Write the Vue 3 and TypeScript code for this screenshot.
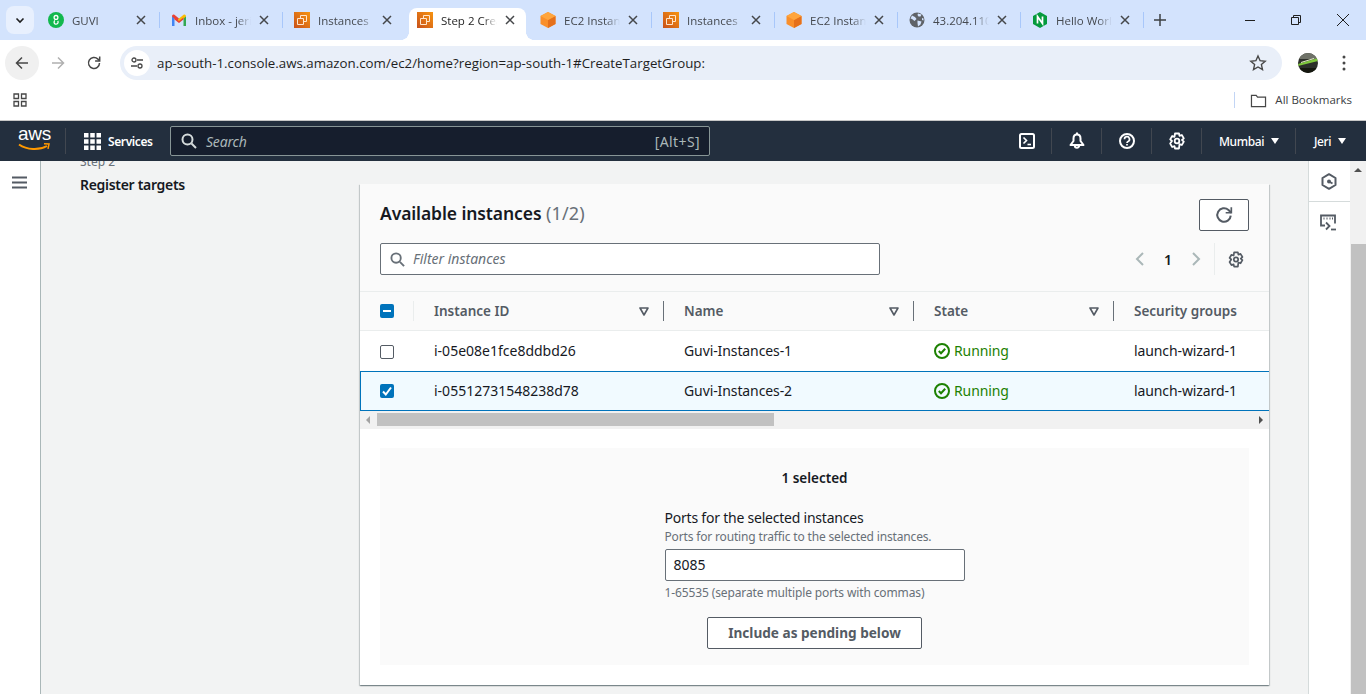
<script setup lang="ts">
interface Tab {
  title: string
  icon: 'guvi' | 'gmail' | 'instances' | 'cube' | 'globe' | 'nginx'
  active?: boolean
}

const tabs: Tab[] = [
  { title: 'GUVI', icon: 'guvi' },
  { title: 'Inbox - jeri', icon: 'gmail' },
  { title: 'Instances | EC2', icon: 'instances' },
  { title: 'Step 2 Create', icon: 'instances', active: true },
  { title: 'EC2 Instance', icon: 'cube' },
  { title: 'Instances | EC2', icon: 'instances' },
  { title: 'EC2 Instance', icon: 'cube' },
  { title: '43.204.110.12', icon: 'globe' },
  { title: 'Hello World', icon: 'nginx' },
]

const columns = ['Instance ID', 'Name', 'State', 'Security groups']

const rows = [
  { id: 'i-05e08e1fce8ddbd26', name: 'Guvi-Instances-1', state: 'Running', group: 'launch-wizard-1', selected: false },
  { id: 'i-05512731548238d78', name: 'Guvi-Instances-2', state: 'Running', group: 'launch-wizard-1', selected: true },
]
</script>

<template>
  <div class="screen">
    <!-- browser tab strip -->
    <div class="tabstrip">
      <button class="tab-search">
        <svg width="12" height="12" viewBox="0 0 12 12" fill="none" stroke="#1f1f1f" stroke-width="1.6"><path d="M2.5 4.5 6 8l3.5-3.500" /></svg>
      </button>
      <div v-for="t in tabs" :key="t.title + t.icon" class="tab" :class="{ active: t.active }">
        <svg v-if="t.icon === 'guvi'" class="fav" viewBox="0 0 16 16">
          <circle cx="8" cy="8" r="8" fill="#12b84e" />
          <circle cx="8" cy="5.400" r="1.900" fill="none" stroke="#fff" stroke-width="1.300" />
          <path d="M9.700 9a2 2 0 1 1-2.700-.5" fill="none" stroke="#fff" stroke-width="1.300" />
        </svg>
        <svg v-else-if="t.icon === 'gmail'" class="fav" viewBox="0 0 16 16">
          <path d="M1 14V4l2.500 1.500V14Z" fill="#4285f4" />
          <path d="M12.500 14V5.500L15 4v10Z" fill="#34a853" />
          <path d="M1 4.500C1 2.600 2.400 2 3.400 2.800L8 6.400l-1 3L1 4.500Z" fill="#ea4335" />
          <path d="M8 6.400l4.600-3.600c1-.8 2.400-.2 2.400 1.700l-2.500 2L8 10 6.500 8.800Z" fill="#fbbc04" />
          <path d="M3.500 5.500 8 9l4.500-3.500v2L8 11 3.500 7.500Z" fill="#ea4335" />
        </svg>
        <svg v-else-if="t.icon === 'instances'" class="fav" viewBox="0 0 16 16">
          <defs>
            <linearGradient id="ec2grad" x1="0" y1="1" x2="1" y2="0">
              <stop offset="0" stop-color="#c8511b" />
              <stop offset="1" stop-color="#f79410" />
            </linearGradient>
          </defs>
          <rect width="16" height="16" fill="url(#ec2grad)" />
          <path d="M6.500 6V3.500h6v6H10M3.500 6.500h6v6h-6Z" fill="none" stroke="#ffe6cc" stroke-width="1" />
        </svg>
        <svg v-else-if="t.icon === 'cube'" class="fav" viewBox="0 0 16 16">
          <path d="M8 0 15.500 4v8L8 16 .5 12V4Z" fill="#f98f2b" />
          <path d="M8 8v8l7.500-4V4Z" fill="#e5701b" />
          <path d="M8 0 15.500 4 8 8 .5 4Z" fill="#ffa53d" />
        </svg>
        <svg v-else-if="t.icon === 'globe'" class="fav" viewBox="0 0 16 16">
          <circle cx="8" cy="8" r="7.500" fill="#5f6368" />
          <path d="M3 3.500 6 5l1.500 2L5.500 9 3 7 1.500 6.500ZM9 1.500l3.500 1-1 2H9.500L8.500 3ZM8.500 8.500l4 1-1 3L9 14.500l-.5-3.500ZM13 6l1.500.5v2L13 8Z" fill="#d3e3fd" />
        </svg>
        <svg v-else class="fav" viewBox="0 0 16 16">
          <path d="M8 0 15 4v8l-7 4-7-4V4Z" fill="#049a3c" />
          <path d="M5.500 11.500v-7l5 7v-7" fill="none" stroke="#fff" stroke-width="1.700" />
        </svg>
        <span class="tab-title">{{ t.title }}</span>
        <svg class="tab-close" width="10" height="10" viewBox="0 0 10 10" stroke="#45474a" stroke-width="1.500"><path d="M1 1l8 8M9 1 1 9" /></svg>
      </div>
      <svg class="tab-plus" width="14" height="14" viewBox="0 0 14 14" stroke="#3c4043" stroke-width="1.500"><path d="M7 1v12M1 7h12" /></svg>
      <div class="win-btns">
        <svg width="12" height="12" viewBox="0 0 12 12" stroke="#1f1f1f"><path d="M1 6.500h10" /></svg>
        <svg width="12" height="12" viewBox="0 0 12 12" fill="none" stroke="#1f1f1f"><path d="M1.500 3.500h7v7h-7ZM3.500 3.500v-2h7v7h-2" /></svg>
        <svg width="14" height="14" viewBox="0 0 14 14" stroke="#1f1f1f"><path d="M1 1l12 12M13 1 1 13" /></svg>
      </div>
    </div>

    <!-- browser toolbar -->
    <div class="toolbar">
      <div class="back-btn">
        <svg width="16" height="16" viewBox="0 0 16 16" fill="none" stroke="#474747" stroke-width="1.500"><path d="M14 8H2.500M8 2.500 2.500 8 8 13.500" /></svg>
      </div>
      <svg class="fwd" width="16" height="16" viewBox="0 0 16 16" fill="none" stroke="#b0b0b0" stroke-width="1.500"><path d="M2 8h11.500M8 2.500 13.500 8 8 13.500" /></svg>
      <svg class="reload" width="16" height="16" viewBox="0 0 16 16" fill="none" stroke="#474747" stroke-width="1.500"><path d="M13.500 8a5.500 5.500 0 1 1-1.600-3.900L13.500 5.800" /><path d="M13.700 1.500v4.600H9.100" /></svg>
      <div class="omnibox">
        <span class="site-chip">
          <svg width="14" height="14" viewBox="0 0 14 14" fill="none" stroke="#474747" stroke-width="1.300"><path d="M7 4h6M1 10h6" /><circle cx="4" cy="4" r="2" /><circle cx="10" cy="10" r="2" /></svg>
        </span>
        <span class="url">ap-south-1.console.aws.amazon.com/ec2/home?region=ap-south-1#CreateTargetGroup:</span>
        <svg class="star" width="18" height="18" viewBox="0 0 18 18" fill="none" stroke="#474747" stroke-width="1.400"><path d="M9 2l2.100 4.700 5.100.5-3.800 3.400 1.100 5L9 13l-4.500 2.600 1.100-5L1.800 7.200l5.100-.5Z" /></svg>
      </div>
      <svg class="avatar" width="20" height="20" viewBox="0 0 20 20">
        <clipPath id="avatarclip"><circle cx="10" cy="10" r="10" /></clipPath>
        <g clip-path="url(#avatarclip)">
          <rect width="20" height="20" fill="#2c2f2a" />
          <rect y="0" width="20" height="6" fill="#6f7268" />
          <path d="M0 11 20 5v3L0 13Z" fill="#7ec63b" />
          <path d="M3 9l13-4v1L3 10Z" fill="#e8f1c8" />
          <rect y="15" width="20" height="5" fill="#15170f" />
        </g>
      </svg>
      <svg class="kebab" width="4" height="16" viewBox="0 0 4 16" fill="#474747"><circle cx="2" cy="2" r="1.500" /><circle cx="2" cy="8" r="1.500" /><circle cx="2" cy="14" r="1.500" /></svg>
    </div>

    <!-- bookmarks bar -->
    <div class="bookmarks">
      <svg width="16" height="16" viewBox="0 0 16 16" fill="none" stroke="#474747" stroke-width="1.300"><path d="M2 2h4.500v4.500H2ZM9.500 2H14v4.500H9.500ZM2 9.500h4.500V14H2ZM9.500 9.500H14V14H9.500Z" /></svg>
      <span class="bm-sep"></span>
      <svg class="bm-folder" width="17" height="15" viewBox="0 0 18 16" fill="none" stroke="#474747" stroke-width="1.300"><path d="M1.500 2.500h5l1.500 2h8.500v10h-15Z" /></svg>
      <span class="bm-label">All Bookmarks</span>
    </div>

    <!-- aws console nav -->
    <nav class="aws-nav">
      <div class="aws-logo">
        <span class="aws-word">aws</span>
        <svg width="32" height="9" viewBox="0 0 32 9" fill="none"><path d="M1 1.500c8 5.500 20 6 28 1.500" stroke="#f90" stroke-width="2" /><path d="M26 .8 31 1l-1 4.800" stroke="#f90" stroke-width="1.500" /></svg>
      </div>
      <div class="services">
        <svg width="17" height="17" viewBox="0 0 17 17" fill="#fff"><path d="M0 0h4.500v4.500H0ZM6.250 0h4.500v4.500h-4.500ZM12.500 0H17v4.500h-4.500ZM0 6.250h4.500v4.500H0ZM6.250 6.250h4.500v4.500h-4.500ZM12.500 6.250H17v4.500h-4.500ZM0 12.500h4.500V17H0ZM6.250 12.500h4.500V17h-4.500ZM12.500 12.500H17V17h-4.500Z" /></svg>
        <span>Services</span>
      </div>
      <div class="aws-search">
        <svg width="16" height="16" viewBox="0 0 16 16" fill="none" stroke="#d5dbdb" stroke-width="2"><circle cx="6.500" cy="6.500" r="5" /><path d="m10.500 10.500 4.500 4.500" /></svg>
        <span class="aws-search-ph">Search</span>
        <span class="aws-search-key">[Alt+S]</span>
      </div>
      <div class="nav-icons">
        <div class="nav-cell">
          <svg width="16" height="16" viewBox="0 0 16 16" fill="none" stroke="#fff" stroke-width="2"><rect x="1" y="1" width="14" height="14" rx="1.500" /><path d="m4.500 4.500 3 3-3 3" stroke-width="1.600" /><path d="M8.500 11.500H12" stroke-width="1.600" /></svg>
        </div>
        <div class="nav-cell">
          <svg width="18" height="18" viewBox="0 0 18 18" fill="none" stroke="#fff" stroke-width="2"><path d="M9 2.500c2.500 0 3.500 2 3.500 4v2.500l3 4H2.500l3-4V6.500c0-2 1-4 3.500-4Z" stroke-linejoin="round" /><path d="M9 .5v2" /><path d="M6.800 13.500a2.200 2.200 0 0 0 4.400 0" /></svg>
        </div>
        <div class="nav-cell">
          <svg width="16" height="16" viewBox="0 0 16 16" fill="none" stroke="#fff" stroke-width="2"><circle cx="8" cy="8" r="7" /><path d="M5.500 6.200a2.500 2.500 0 1 1 3.600 2.200C8.300 8.800 8 9.200 8 10" stroke-width="1.700" /><path d="M8 11v1.500" stroke-width="1.700" /></svg>
        </div>
        <div class="nav-cell">
          <svg width="16" height="18" viewBox="0 0 16 18" fill="none" stroke="#fff" stroke-width="1.800"><path d="M6 1.500h4l.5 2.300 2.300-.8 2 3.400L13 8l1.800 1.600-2 3.400-2.300-.8L10 16.500H6l-.5-2.300-2.300.8-2-3.400L3 9 1.200 7.400l2-3.400 2.300.8Z" stroke-linejoin="round" /><circle cx="8" cy="9" r="2.300" /></svg>
        </div>
        <div class="nav-text region">Mumbai<span class="caret"></span></div>
        <div class="nav-text user">Jeri<span class="caret"></span></div>
      </div>
    </nav>

    <!-- console body -->
    <div class="console">
      <aside class="left-rail">
        <svg width="15" height="13" viewBox="0 0 15 13" stroke="#545b64" stroke-width="2"><path d="M0 1.500h15M0 6.500h15M0 11.500h15" /></svg>
      </aside>

      <main class="content">
        <div class="wizard-nav">
          <div class="step-no">Step 2</div>
          <div class="step-title">Register targets</div>
        </div>

        <section class="card">
          <div class="card-head">
            <div class="head-row">
              <h2>Available instances <span class="count">(1/2)</span></h2>
              <button class="refresh">
                <svg width="18" height="18" viewBox="0 0 16 16" fill="none" stroke="#545b64" stroke-width="1.800"><path d="M14 8.500a6 6 0 1 1-2-5L14.500 6" /><path d="M14.500 1v5h-5" stroke-width="1.500" /></svg>
              </button>
            </div>
            <div class="head-row filter-row">
              <div class="filter">
                <svg width="15" height="15" viewBox="0 0 16 16" fill="none" stroke="#687078" stroke-width="2"><circle cx="6.500" cy="6.500" r="5" /><path d="m10.500 10.500 4.500 4.500" /></svg>
                <span>Filter instances</span>
              </div>
              <div class="pager">
                <svg width="10" height="14" viewBox="0 0 10 14" fill="none" stroke="#aab7b8" stroke-width="2"><path d="M8 1 2 7l6 6" /></svg>
                <span class="page-no">1</span>
                <svg width="10" height="14" viewBox="0 0 10 14" fill="none" stroke="#aab7b8" stroke-width="2"><path d="m2 1 6 6-6 6" /></svg>
                <span class="pager-sep"></span>
                <svg width="16" height="17" viewBox="0 0 16 18" fill="none" stroke="#545b64" stroke-width="1.800"><path d="M6 1.500h4l.5 2.300 2.300-.8 2 3.400L13 8l1.800 1.600-2 3.400-2.300-.8L10 16.500H6l-.5-2.300-2.300.8-2-3.400L3 9 1.200 7.400l2-3.400 2.300.8Z" stroke-linejoin="round" /><circle cx="8" cy="9" r="2.300" /></svg>
              </div>
            </div>
          </div>

          <div class="table">
            <div class="t-row t-header">
              <div class="t-check first">
                <span class="check on">
                  <svg width="14" height="14" viewBox="0 0 14 14" stroke="#fff" stroke-width="2"><path d="M3 7h8" /></svg>
                </span>
              </div>
              <div v-for="(c, i) in columns" :key="c" class="t-cell">
                <span>{{ c }}</span>
                <template v-if="i < 3">
                  <svg class="sort" width="10" height="9" viewBox="0 0 10 9" fill="none" stroke="#545b64" stroke-width="1.600"><path d="M1 1h8L5 8Z" stroke-linejoin="round" /></svg>
                  <span class="col-sep"></span>
                </template>
              </div>
            </div>
            <div v-for="r in rows" :key="r.id" class="t-row t-body" :class="{ selected: r.selected }">
              <div class="t-check">
                <span class="check" :class="{ on: r.selected }">
                  <svg v-if="r.selected" width="14" height="14" viewBox="0 0 14 14" fill="none" stroke="#fff" stroke-width="2"><path d="m3 7.500 2.800 3L11 3.500" /></svg>
                </span>
              </div>
              <div class="t-cell t-id">{{ r.id }}</div>
              <div class="t-cell t-text">{{ r.name }}</div>
              <div class="t-cell t-text running">
                <svg width="16" height="16" viewBox="0 0 16 16" fill="none" stroke="#1d8102" stroke-width="2"><circle cx="8" cy="8" r="7" /><path d="m4.800 8 2.200 2.300 4.200-4.500" /></svg>
                <span>{{ r.state }}</span>
              </div>
              <div class="t-cell t-text">{{ r.group }}</div>
            </div>
            <div class="hscroll">
              <span class="arrow-l"></span>
              <span class="hthumb"></span>
              <span class="arrow-r"></span>
            </div>
          </div>

          <div class="pending">
            <div class="selected-count">1 selected</div>
            <div class="ports">
              <div class="ports-label">Ports for the selected instances</div>
              <div class="ports-desc">Ports for routing traffic to the selected instances.</div>
              <div class="ports-input">8085</div>
              <div class="ports-hint">1-65535 (separate multiple ports with commas)</div>
              <button class="include">Include as pending below</button>
            </div>
          </div>
        </section>
      </main>

      <aside class="right-rail">
        <div class="rail-top">
          <svg width="16" height="17" viewBox="0 0 16 17" fill="none" stroke="#545b64" stroke-width="2"><path d="M8 1.200 14.500 5v7L8 15.800 1.500 12V5Z" stroke-linejoin="round" /><circle cx="8" cy="8.500" r="2" fill="#545b64" stroke="none" /><path d="m8 8.500 3.500 2" /></svg>
        </div>
        <div class="rail-bottom">
          <svg width="17" height="17" viewBox="0 0 17 17" fill="none" stroke="#545b64" stroke-width="1.800"><path d="M5 11.500H1V1.500h14v8" /><path d="m6 8.500 3.500 3.500L6 15.500" /><path d="M11 15.500h5" /><path d="M3.500 4.500h1M6.500 4.500h1M9.500 4.500h1M12 4.500h1" stroke-width="2" /></svg>
        </div>
      </aside>

      <div class="vscroll">
        <span class="arrow-u"></span>
        <span class="vthumb"></span>
      </div>
    </div>
  </div>
</template>

<style>
html, body {
  margin: 0;
  overflow: hidden;
}
</style>

<style scoped>
.screen {
  width: 1366px;
  height: 694px;
  display: flex;
  flex-direction: column;
  font-family: "Noto Sans", "Open Sans", sans-serif;
  font-size: 14px;
  color: #16191f;
  overflow: hidden;
}

/* tab strip */
.tabstrip {
  height: 40px;
  background: #d3e3fd;
  display: flex;
  align-items: flex-end;
  padding-left: 6px;
  flex-shrink: 0;
  position: relative;
}
.tab-search {
  width: 28px;
  height: 28px;
  margin: 0 3px 6px 0;
  padding: 0;
  border: 0;
  border-radius: 8px;
  background: #e8f0fe;
  display: flex;
  align-items: center;
  justify-content: center;
}
.tab {
  width: 123px;
  height: 32px;
  box-sizing: border-box;
  position: relative;
  display: flex;
  align-items: center;
  padding: 0 0 8px 11px;
  font-family: "Open Sans", sans-serif;
  font-size: 11.5px;
  color: #45494f;
}
.tab::after {
  content: '';
  position: absolute;
  right: 0;
  top: 4px;
  height: 16px;
  width: 1px;
  background: #a8c7fa;
}
.tab:nth-of-type(3)::after {
  display: none;
}
.tab.active::before {
  content: '';
  position: absolute;
  left: 3px;
  right: 3px;
  top: 0;
  bottom: 0;
  background: #fff;
  border-radius: 8px 8px 0 0;
}
/* flared bottom corners of the active tab */
.tab.active::after {
  left: -5px;
  right: -5px;
  top: auto;
  bottom: 0;
  width: auto;
  height: 8px;
  background:
    radial-gradient(circle 8px at 0 0, transparent 97%, #fff) 0 0 / 8px 8px no-repeat,
    radial-gradient(circle 8px at 100% 0, transparent 97%, #fff) 100% 0 / 8px 8px no-repeat;
}
.tab.active {
  color: #1f1f1f;
}
.tab.active > * {
  position: relative;
}
.fav {
  width: 16px;
  height: 16px;
  flex-shrink: 0;
  margin-right: 8px;
}
.tab-title {
  width: 56px;
  white-space: nowrap;
  overflow: hidden;
  -webkit-mask-image: linear-gradient(to right, #000 75%, transparent 100%);
  mask-image: linear-gradient(to right, #000 75%, transparent 100%);
}
.tab-close {
  margin-left: 8px;
  flex-shrink: 0;
}
.tab-plus {
  margin: 0 0 13px 9px;
}
.win-btns {
  position: absolute;
  right: 0;
  top: 0;
  height: 40px;
  display: flex;
  align-items: center;
  gap: 34px;
  padding: 0 16px 0 0;
}

/* toolbar */
.toolbar {
  height: 44px;
  box-sizing: border-box;
  padding: 2px 0 0 5px;
  background: #fff;
  display: flex;
  align-items: center;
  flex-shrink: 0;
}
.back-btn {
  width: 34px;
  height: 34px;
  border-radius: 50%;
  background: #f0f0f0;
  display: flex;
  align-items: center;
  justify-content: center;
}
.fwd {
  margin-left: 11px;
}
.reload {
  margin-left: 20px;
}
.omnibox {
  margin-left: 18px;
  width: 1162px;
  height: 34px;
  border-radius: 17px;
  background: #e9eff9;
  display: flex;
  align-items: center;
  padding: 0 15px 0 4px;
  box-sizing: border-box;
}
.site-chip {
  width: 26px;
  height: 26px;
  border-radius: 50%;
  background: #fff;
  display: flex;
  align-items: center;
  justify-content: center;
  flex-shrink: 0;
}
.url {
  margin-left: 7px;
  font-family: "Open Sans", sans-serif;
  font-size: 13.3px;
  color: #1f1f1f;
  flex: 1;
  white-space: nowrap;
}
.avatar {
  margin-left: 16px;
}
.kebab {
  margin-left: 24px;
}

/* bookmarks */
.bookmarks {
  height: 37px;
  box-sizing: border-box;
  background: #fff;
  border-bottom: 1px solid #c7c7c7;
  display: flex;
  align-items: center;
  padding: 0 0 4px 12px;
  flex-shrink: 0;
}
.bm-sep {
  width: 1px;
  height: 16px;
  background: #c2d5f5;
  margin-left: auto;
}
.bm-folder {
  margin-left: 15px;
}
.bm-label {
  font-family: "Open Sans", sans-serif;
  font-size: 11.5px;
  color: #3c4043;
  margin: -2px 14px 0 8px;
}

/* aws nav */
.aws-nav {
  height: 40px;
  background: #232f3e;
  display: flex;
  align-items: center;
  color: #fff;
  flex-shrink: 0;
}
.aws-logo {
  width: 66px;
  padding-left: 18px;
  box-sizing: border-box;
  border-right: 1px solid #414750;
  height: 26px;
  display: flex;
  flex-direction: column;
  line-height: 14px;
}
.aws-word {
  font-family: "Liberation Sans", sans-serif;
  font-size: 19px;
  line-height: 15px;
  margin-top: -2px;
  letter-spacing: -0.3px;
}
.aws-logo svg {
  margin-top: 2px;
}
.services {
  width: 104px;
  display: flex;
  align-items: center;
  gap: 7px;
  padding-left: 18px;
  box-sizing: border-box;
  font-size: 12px;
  letter-spacing: -0.4px;
  font-weight: 600;
}
.aws-search {
  width: 540px;
  height: 30px;
  box-sizing: border-box;
  background: #161e2d;
  border: 1px solid #879596;
  border-radius: 2px;
  display: flex;
  align-items: center;
  padding: 0 9px 0 10px;
  font-size: 14px;
}
.aws-search-ph {
  margin-left: 9px;
  font-style: italic;
  color: #aab7b8;
  flex: 1;
  letter-spacing: -0.2px;
}
.aws-search-key {
  color: #aab7b8;
  letter-spacing: 0.4px;
}
.nav-icons {
  margin-left: auto;
  display: flex;
  align-items: center;
  height: 26px;
}
.nav-cell {
  width: 50px;
  height: 26px;
  box-sizing: border-box;
  border-right: 1px solid #414750;
  display: flex;
  align-items: center;
  justify-content: center;
}
.nav-text {
  height: 26px;
  display: flex;
  align-items: center;
  font-size: 12px;
  letter-spacing: -0.4px;
  font-weight: 500;
  box-sizing: border-box;
}
.region {
  width: 94px;
  padding-left: 17px;
  border-right: 1px solid #414750;
}
.user {
  width: 70px;
  padding-left: 18px;
}
.caret {
  width: 0;
  height: 0;
  border-left: 4.5px solid transparent;
  border-right: 4.5px solid transparent;
  border-top: 6px solid #fff;
  margin-left: 7px;
}

/* console body */
.console {
  flex: 1;
  min-height: 0;
  display: flex;
  background: #f2f3f3;
}
.left-rail {
  width: 41px;
  box-sizing: border-box;
  background: #fff;
  border-right: 1px solid #aab7b8;
  padding: 15px 0 0 12px;
  flex-shrink: 0;
}
.left-rail svg {
  display: block;
}
.content {
  flex: 1;
  min-width: 0;
  display: flex;
  overflow: hidden;
  padding-left: 39px;
}
.wizard-nav {
  width: 280px;
  flex-shrink: 0;
  margin-top: -7px;
}
.step-no {
  font-size: 12px;
  line-height: 16px;
  color: #687078;
}
.step-title {
  margin-top: 5px;
  font-size: 14px;
  letter-spacing: -0.3px;
  line-height: 20px;
  font-weight: 600;
}
.card {
  width: 909px;
  height: 501px;
  margin-top: 23px;
  background: #fff;
  box-shadow: 0 1px 1px 0 rgba(0, 28, 36, 0.3), 1px 1px 1px 0 rgba(0, 28, 36, 0.15), -1px 1px 1px 0 rgba(0, 28, 36, 0.15);
  flex-shrink: 0;
}
.card-head {
  background: #fafafa;
  padding: 15px 20px 16px;
  height: 107px;
  box-sizing: border-box;
}
.head-row {
  display: flex;
  align-items: center;
  justify-content: space-between;
}
.head-row h2 {
  margin: -1px 0 0;
  align-self: flex-start;
  font-size: 17.5px;
  letter-spacing: -0.1px;
  font-weight: 600;
  line-height: 30px;
}
.count {
  color: #687078;
  font-weight: 400;
  font-size: 18px;
  letter-spacing: 0.2px;
}
.refresh {
  width: 50px;
  height: 32px;
  box-sizing: border-box;
  background: #fff;
  border: 1px solid #545b64;
  border-radius: 2px;
  padding: 0;
  display: flex;
  align-items: center;
  justify-content: center;
}
.filter-row {
  margin-top: 12px;
}
.filter {
  width: 500px;
  height: 32px;
  box-sizing: border-box;
  background: #fff;
  border: 1px solid #687078;
  border-radius: 2px;
  display: flex;
  align-items: center;
  gap: 8px;
  padding: 0 0 2px 9px;
  color: #687078;
  font-style: italic;
  font-size: 14px;
}
.filter svg {
  margin-top: 2px;
}
.pager {
  display: flex;
  align-items: center;
  height: 32px;
  padding-right: 5px;
}
.page-no {
  width: 46px;
  text-align: center;
  font-weight: 600;
  font-size: 14px;
}
.pager-sep {
  width: 1px;
  height: 32px;
  background: #eaeded;
  margin: 0 13px 0 13px;
}

/* table */
.t-row {
  display: grid;
  grid-template-columns: 54px 250px 250px 200px 155px;
  align-items: center;
  box-sizing: border-box;
}
.t-header {
  height: 40px;
  background: #fafafa;
  border-top: 1px solid #eaeded;
  border-bottom: 1px solid #eaeded;
  color: #545b64;
  font-weight: 600;
}
.t-header .t-cell {
  font-size: 13.5px;
  padding-bottom: 1px;
}
.t-body {
  height: 40px;
  background: #fff;
}
.t-body .t-cell {
  padding-bottom: 2px;
}
.t-body .check {
  margin-top: 2px;
}
.t-body.selected {
  grid-template-columns: 53px 250px 250px 200px 155px;
  background: #f1faff;
  border: 1px solid #0073bb;
  border-right: 0;
}
.t-body.selected .check {
  margin-top: 0;
}
.t-check {
  padding-left: 20px;
  height: 100%;
  display: flex;
  align-items: center;
  box-sizing: border-box;
  position: relative;
}
.selected .t-check {
  padding-left: 19px;
}
.t-check.first::after {
  content: '';
  position: absolute;
  right: 0;
  top: 9px;
  height: 20px;
  width: 1px;
  background: #eaeded;
}
.check {
  width: 14px;
  height: 14px;
  box-sizing: border-box;
  border: 1px solid #545b64;
  border-radius: 2px;
  background: #fff;
  display: block;
}
.check.on {
  border: 0;
  background: #0073bb;
}
.check svg {
  display: block;
}
.t-cell {
  padding-left: 20px;
  height: 100%;
  display: flex;
  align-items: center;
  position: relative;
  white-space: nowrap;
  font-size: 14px;
  box-sizing: border-box;
}
.t-text {
  letter-spacing: -0.1px;
}
.sort {
  position: absolute;
  right: 15px;
  top: 15px;
}
.col-sep {
  position: absolute;
  right: 0;
  top: 9px;
  height: 20px;
  width: 1px;
  background: #687078;
}
.running {
  color: #1d8102;
  gap: 4px;
}
.running svg {
  margin-top: 1px;
}
.hscroll {
  height: 18px;
  background: #f1f1f1;
  display: flex;
  align-items: center;
  position: relative;
}
.hthumb {
  position: absolute;
  left: 17px;
  width: 397px;
  top: 2px;
  height: 13px;
  background: #c1c1c1;
}
.arrow-l,
.arrow-r {
  position: absolute;
  top: 5px;
  width: 0;
  height: 0;
  border-top: 4px solid transparent;
  border-bottom: 4px solid transparent;
}
.arrow-l {
  left: 6px;
  border-right: 4px solid #a3a3a3;
}
.arrow-r {
  right: 6px;
  border-left: 4px solid #505050;
}

/* pending panel */
.pending {
  margin: 19px 20px 20px;
  height: 217px;
  background: #fafafa;
  display: flex;
  flex-direction: column;
  align-items: center;
}
.selected-count {
  margin-top: 20px;
  font-weight: 600;
  font-size: 13.5px;
  line-height: 20px;
}
.ports {
  width: 300px;
  margin-top: 20px;
  display: flex;
  flex-direction: column;
}
.ports-label {
  font-size: 14px;
  letter-spacing: -0.22px;
  line-height: 20px;
}
.ports-desc,
.ports-hint {
  font-size: 12px;
  letter-spacing: -0.16px;
  line-height: 16px;
  color: #687078;
  white-space: nowrap;
}
.ports-desc {
  margin-top: 1px;
}
.ports-hint {
  letter-spacing: -0.12px;
  margin-top: 4px;
}
.ports-input {
  margin-top: 4px;
  height: 32px;
  box-sizing: border-box;
  background: #fff;
  border: 1px solid #687078;
  border-radius: 2px;
  padding: 0 0 1px 8px;
  display: flex;
  align-items: center;
  font-size: 14px;
}
.include {
  margin: 16px auto 0;
  width: 215px;
  height: 32px;
  background: #fff;
  border: 1px solid #545b64;
  border-radius: 2px;
  font-family: inherit;
  font-size: 13.6px;
  font-weight: 700;
  color: #545b64;
  padding: 0 0 2px;
}

/* right side */
.right-rail {
  width: 42px;
  box-sizing: border-box;
  background: #fff;
  border-left: 1px solid #d5dbdb;
  flex-shrink: 0;
}
.rail-top {
  height: 41px;
  border-bottom: 1px solid #d5dbdb;
  display: flex;
  align-items: center;
  justify-content: center;
  box-sizing: border-box;
  padding: 1px 1px 0 0;
}
.rail-bottom {
  display: flex;
  justify-content: center;
  padding: 12px 2px 0 0;
}
.vscroll {
  width: 16px;
  background: #f1f1f1;
  flex-shrink: 0;
  position: relative;
}
.vthumb {
  position: absolute;
  left: 1px;
  right: 0;
  top: 83px;
  bottom: 0;
  background: #c1c1c1;
}
.arrow-u {
  position: absolute;
  left: 4px;
  top: 7px;
  width: 0;
  height: 0;
  border-left: 4px solid transparent;
  border-right: 4px solid transparent;
  border-bottom: 4px solid #505050;
}
</style>
